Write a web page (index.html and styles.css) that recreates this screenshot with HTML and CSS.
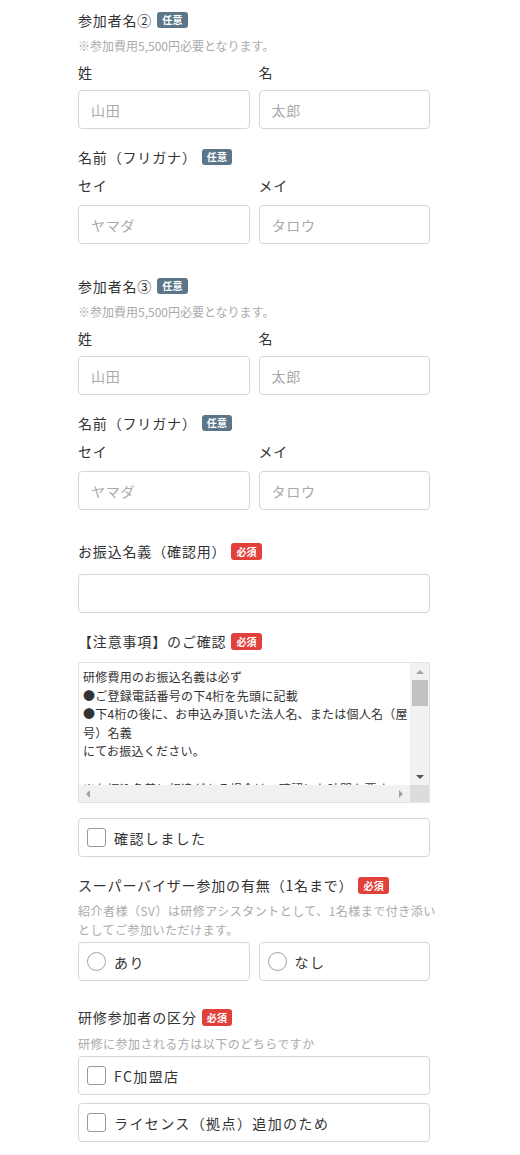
FILE: index.html
```html
<!DOCTYPE html>
<html lang="ja">
<head>
<meta charset="utf-8">
<link rel="stylesheet" href="styles.css">
</head>
<body>
<form class="form">
  <section class="block">
    <div class="title">参加者名②<span class="badge badge-opt">任意</span></div>
    <p class="note">※参加費用5,500円必要となります。</p>
    <div class="cols">
      <label class="field"><span class="flabel">姓</span><input class="input" placeholder="山田"></label>
      <label class="field"><span class="flabel">名</span><input class="input" placeholder="太郎"></label>
    </div>
    <div class="title title-sub">名前（フリガナ）<span class="badge badge-opt">任意</span></div>
    <div class="cols cols-kana">
      <label class="field"><span class="flabel">セイ</span><input class="input" placeholder="ヤマダ"></label>
      <label class="field"><span class="flabel">メイ</span><input class="input" placeholder="タロウ"></label>
    </div>
  </section>

  <section class="block block-next">
    <div class="title">参加者名③<span class="badge badge-opt">任意</span></div>
    <p class="note">※参加費用5,500円必要となります。</p>
    <div class="cols">
      <label class="field"><span class="flabel">姓</span><input class="input" placeholder="山田"></label>
      <label class="field"><span class="flabel">名</span><input class="input" placeholder="太郎"></label>
    </div>
    <div class="title title-sub">名前（フリガナ）<span class="badge badge-opt">任意</span></div>
    <div class="cols cols-kana">
      <label class="field"><span class="flabel">セイ</span><input class="input" placeholder="ヤマダ"></label>
      <label class="field"><span class="flabel">メイ</span><input class="input" placeholder="タロウ"></label>
    </div>
  </section>

  <section class="block block-transfer">
    <div class="title">お振込名義（確認用）<span class="badge badge-req">必須</span></div>
    <input class="input input-full">
  </section>

  <section class="block block-notice">
    <div class="title">【注意事項】のご確認<span class="badge badge-req">必須</span></div>
    <div class="terms">
      <div class="terms-text">
        <div class="tline">研修費用のお振込名義は必ず</div>
        <div class="tline">●ご登録電話番号の下4桁を先頭に記載</div>
        <div class="tline">●下4桁の後に、お申込み頂いた法人名、または個人名（屋</div>
        <div class="tline">号）名義</div>
        <div class="tline">にてお振込ください。</div>
        <div class="tline">&nbsp;</div>
        <div class="tline">※お振込名義に相違がある場合は、確認にお時間を要す</div>
      </div>
      <div class="vbar">
        <span class="arrow arrow-up"></span>
        <span class="vthumb"></span>
        <span class="vspace"></span>
        <span class="arrow arrow-down"></span>
      </div>
      <div class="hbar">
        <span class="arrow arrow-left"></span>
        <span class="arrow arrow-right"></span>
      </div>
      <div class="corner"></div>
    </div>
    <label class="choice choice-confirm"><span class="box"></span><span class="ctext">確認しました</span></label>
  </section>

  <section class="block block-sv">
    <div class="title">スーパーバイザー参加の有無（1名まで）<span class="badge badge-req">必須</span></div>
    <p class="desc">紹介者様（SV）は研修アシスタントとして、1名様まで付き添い<br>としてご参加いただけます。</p>
    <div class="cols">
      <label class="choice"><span class="circle"></span><span class="ctext">あり</span></label>
      <label class="choice"><span class="circle"></span><span class="ctext">なし</span></label>
    </div>
  </section>

  <section class="block block-type">
    <div class="title">研修参加者の区分<span class="badge badge-req">必須</span></div>
    <p class="desc">研修に参加される方は以下のどちらですか</p>
    <div class="stack">
      <label class="choice"><span class="box"></span><span class="ctext">FC加盟店</span></label>
      <label class="choice"><span class="box"></span><span class="ctext">ライセンス（拠点）追加のため</span></label>
    </div>
  </section>
</form>
</body>
</html>
```

FILE: styles.css
```css
* { box-sizing: border-box; }
html, body { margin: 0; padding: 0; background: #fff; }
body {
  font-family: "Noto Sans CJK JP", "Noto Sans", sans-serif;
  color: #333;
}
.form {
  width: 352px;
  margin-left: 78px;
  padding-top: 8px;
}
.block { margin: 0; }
.block-next { margin-top: 30px; }
.block-transfer { margin-top: 29px; }
.block-notice { margin-top: 16px; }
.block-sv { margin-top: 16px; }
.block-type { margin-top: 24px; }

.title {
  font-size: 14px;
  line-height: 24px;
  letter-spacing: 0.06em;
  color: #333;
  display: flex;
  align-items: center;
}
.title-sub { margin-top: 16px; }
.badge {
  display: inline-block;
  font-size: 10px;
  font-weight: 700;
  line-height: 16px;
  padding: 0 5px;
  border-radius: 3px;
  color: #fff;
  margin-left: 5px;
  letter-spacing: 0.02em;
}
.badge-opt { background: #5b7688; }
.badge-req { background: #e2413b; line-height: 17px; }

.note {
  margin: 5px 0 0;
  font-size: 12px;
  line-height: 18px;
  color: #aaa;
}
.desc {
  margin: 4px 0 0;
  font-size: 12px;
  line-height: 19px;
  color: #aaa;
  letter-spacing: 0.04em;
  white-space: nowrap;
}
.block-type .desc { margin-top: 5px; }

.cols {
  display: grid;
  grid-template-columns: 1fr 1fr;
  gap: 9px;
  margin-top: 7px;
}
.cols-kana { margin-top: 6px; }
.block-sv .cols { margin-top: 3px; }
.field { display: flex; flex-direction: column; }
.flabel {
  font-size: 14px;
  line-height: 20px;
  letter-spacing: 0.05em;
  color: #333;
  margin-bottom: 8px;
}
.cols-kana .flabel { margin-bottom: 10px; }
.input {
  display: block;
  width: 100%;
  height: 39px;
  border: 1px solid #d6d6d6;
  border-radius: 4px;
  padding: 0 12px;
  font-family: inherit;
  font-size: 14px;
  letter-spacing: 0.05em;
  color: #333;
  background: #fff;
  outline: none;
}
.input::placeholder { color: #aaa; }
.input-full { margin-top: 11px; }

/* notice box with classic scrollbars */
.terms {
  margin-top: 9px;
  height: 141px;
  border: 1px solid #e3e3e3;
  display: grid;
  grid-template-columns: 1fr 19px;
  grid-template-rows: 1fr 17px;
  background: #fff;
}
.terms-text {
  overflow: hidden;
  padding: 5px 0 0 4px;
  font-size: 12px;
  line-height: 18.6px;
  color: #333;
  white-space: nowrap;
  letter-spacing: 0.02em;
}
.vbar {
  background: #f1f1f1;
  display: flex;
  flex-direction: column;
  align-items: center;
  padding: 7px 0 6px;
}
.vthumb {
  width: 16px;
  height: 26px;
  background: #c1c1c1;
  margin-top: 6px;
}
.vspace { flex: 1; }
.hbar {
  background: #f1f1f1;
  display: flex;
  align-items: center;
  justify-content: space-between;
  padding: 0 7px;
}
.corner { background: #dcdcdc; }
.arrow { width: 0; height: 0; display: block; }
.arrow-up {
  border-left: 4px solid transparent;
  border-right: 4px solid transparent;
  border-bottom: 4px solid #a3a3a3;
}
.arrow-down {
  border-left: 4px solid transparent;
  border-right: 4px solid transparent;
  border-top: 4px solid #505050;
}
.arrow-left {
  border-top: 4px solid transparent;
  border-bottom: 4px solid transparent;
  border-right: 4px solid #a3a3a3;
}
.arrow-right {
  border-top: 4px solid transparent;
  border-bottom: 4px solid transparent;
  border-left: 4px solid #a3a3a3;
}

.choice {
  display: flex;
  align-items: center;
  height: 39px;
  border: 1px solid #d6d6d6;
  border-radius: 4px;
  padding: 0 8px;
  background: #fff;
}
.choice-confirm { margin-top: 15px; }
.box {
  width: 19px;
  height: 19px;
  border: 1.5px solid #8d9ba5;
  border-radius: 3px;
  flex: none;
}
.circle {
  width: 19px;
  height: 19px;
  border: 1.5px solid #98a4ad;
  border-radius: 50%;
  flex: none;
}
.ctext {
  margin-left: 8px;
  font-size: 14px;
  line-height: 20px;
  letter-spacing: 0.1em;
  color: #333;
}
.stack {
  display: flex;
  flex-direction: column;
  gap: 8px;
  margin-top: 3px;
}
```
